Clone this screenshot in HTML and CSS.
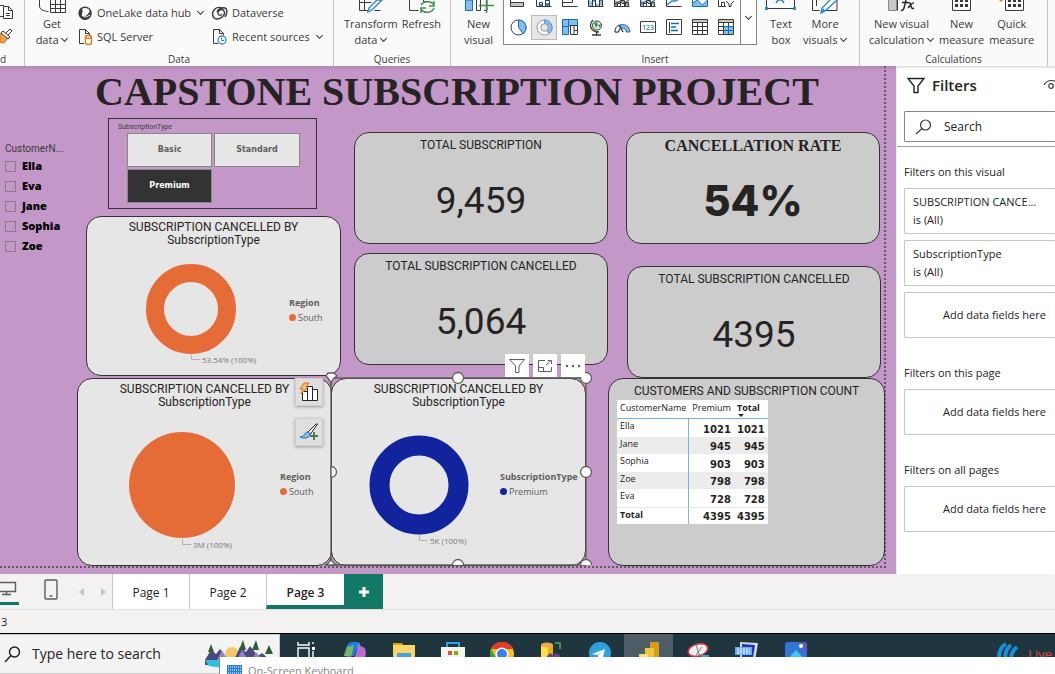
FILE: index.html
```html
<!DOCTYPE html>
<html lang="en">
<head>
<meta charset="utf-8">
<title>Capstone Subscription Project</title>
<link rel="stylesheet" href="styles.css">
</head>
<body>
<div class="app">
  <header class="ribbon">
    <section class="group clipboard">
      <div class="group-body stack-icons">
        <button class="icon-btn" aria-label="Copy"><svg width="14" height="16" viewBox="0 0 14 16" fill="none" stroke="#3b3a39"><path d="M0 1.500h4M0 12.500h3M3.500 2.500h5l4 4v8h-9zM8.500 2.500v4h4M6 9.500h4M6 11.500h4"/></svg></button>
        <button class="icon-btn" aria-label="Format painter"><svg width="14" height="16" viewBox="0 0 14 16"><path d="M0 6l3-1 5 5-4 5-4-1z" fill="#f5a04c" stroke="#d86a10"/><path d="M1 5l2-2 7 6-2 2zM6 5l4-4 2 2-4 4" fill="#fff" stroke="#3b3a39"/></svg></button>
      </div>
      <div class="group-label">d</div>
    </section>
    <section class="group">
      <div class="group-body data-body">
        <button class="big-btn get-data"><svg width="28" height="14" viewBox="0 0 28 14" fill="none" stroke="#3b3a39"><path d="M1.500 0v6c0 3 3 5 9 5.500M12.500 0v12.500h15V0M12.500 4.500h15M12.500 8.500h15M17.500 0v12.500M22.500 0v12.500"/></svg><span>Get<br>data <i class="chev"></i></span></button>
        <div class="pair first">
          <button class="small-btn"><svg width="15" height="15" viewBox="0 0 15 15"><circle cx="7" cy="7" r="5.800" fill="none" stroke="#3b3a39" stroke-width="1.600"/><path d="M2 3c3-1 3 2 2 5s3 3 5 1l4-5c2 6-2 10-6 10S0 9 2 3z" fill="#3b3a39"/><path d="M6 7l5-4M4 9c2 3 5 2 8 0" stroke="#fff" fill="none"/></svg><span>OneLake data hub</span><i class="chev"></i></button>
          <button class="small-btn"><svg width="15" height="16" viewBox="0 0 15 16"><path d="M6 14.500H1.500v-14h6l4 4V6M7.500.5v4h4" fill="none" stroke="#3b3a39"/><path d="M7.500 8v6c0 2 6 2 6 0V8c0-2-6-2-6 0c0 2 6 2 6 0" fill="#fff" stroke="#e07a1c" stroke-width="1.400"/></svg><span>SQL Server</span></button>
        </div>
        <div class="pair">
          <button class="small-btn"><svg width="16" height="14" viewBox="0 0 16 14" fill="none" stroke="#3b3a39" stroke-width="1.400"><path d="M10 8c-1 2-4 2-4-1s4-5 6-2c2 4-3 8-7 8S-1 8 2 4s8-3 9 0M5 6c1-3 5-5 8-4s2 6 0 9"/></svg><span>Dataverse</span></button>
          <button class="small-btn"><svg width="16" height="16" viewBox="0 0 16 16"><path d="M6 14.500H1.500v-14h6l4 4V6M7.500.5v4h4" fill="none" stroke="#3b3a39"/><circle cx="10" cy="11" r="4" fill="#fff" stroke="#2b88d8" stroke-width="1.300"/><path d="M9.500 8.500v3H12" fill="none" stroke="#2b88d8"/></svg><span>Recent sources</span><i class="chev"></i></button>
        </div>
      </div>
      <div class="group-label">Data</div>
    </section>
    <section class="group">
      <div class="group-body queries-body">
        <button class="big-btn"><svg width="28" height="14" viewBox="0 0 28 14"><path d="M2.500 0v10.500h10M2.500 2.500h12M7.500 0v10.500M23.500 10.500h-6" fill="none" stroke="#3b3a39"/><path d="M25 0L15 10l-4 2 1-4L20 0z" fill="#fff" stroke="#2b88d8" stroke-width="1.400"/><path d="M11 12l2-4 2 2z" fill="#83beec"/></svg><span>Transform<br>data <i class="chev"></i></span></button>
        <button class="big-btn"><svg width="28" height="14" viewBox="0 0 28 14" fill="none"><path d="M2.500 0v10.500h9M16.500 0v1.500h4" stroke="#3b3a39"/><path d="M14 5c3-5 12-4 13 1M27 1v5h-5M27 8c-2 5-10 6-13 1M14 13V8h5" stroke="#3f9150" stroke-width="1.500"/></svg><span>Refresh</span></button>
      </div>
      <div class="group-label">Queries</div>
    </section>
    <section class="group">
      <div class="group-body insert-body">
        <button class="big-btn new-visual"><svg width="30" height="14" viewBox="0 0 30 14"><path d="M1.500 0h7v10.500h-7z" fill="#83beec" stroke="#106ebe"/><path d="M12.500 0v10.500h4V0M20 10.500h3V0" fill="none" stroke="#3b3a39"/><path d="M22.500 0v13M15 5.500h15" stroke="#3f9150" stroke-width="1.500"/></svg><span>New<br>visual</span></button>
        <div class="gallery">
          <div class="gallery-grid">
            <button aria-label="Stacked bar"><svg width="16" height="7" viewBox="0 0 16 7"><path d="M.5 0v6.500h13v-4H.5" fill="#c8c6c4" stroke="#3b3a39"/></svg></button>
            <button aria-label="Stacked column"><svg width="16" height="7" viewBox="0 0 16 7"><path d="M.5 0v6.500h15M3.500 6V2.500h3V6M9.500 6V.5h4V6" fill="none" stroke="#3b3a39"/><path d="M4 4h2v2H4zM10 3h3v3h-3z" fill="#2b88d8"/></svg></button>
            <button aria-label="Clustered bar"><svg width="16" height="7" viewBox="0 0 16 7"><path d="M.5 0v6.500h15M.5 2.500h10V0" fill="none" stroke="#3b3a39"/></svg></button>
            <button aria-label="Clustered column"><svg width="16" height="7" viewBox="0 0 16 7"><path d="M.5 0v6.500h15M4.500 6V0h3v6M11.500 6V0h3v6" fill="#83beec" stroke="#3b3a39"/></svg></button>
            <button aria-label="Line and column"><svg width="16" height="7" viewBox="0 0 16 7"><path d="M.5 0v6.500h15M3.500 6V3.500h3V6M6.500 6V.5h4V6M11.500 6V2.500h3V6" fill="#a19f9d" stroke="#3b3a39"/><path d="M1 4l5-3 3 3 6-4" fill="none" stroke="#3b3a39"/></svg></button>
            <button aria-label="Line and stacked column"><svg width="16" height="7" viewBox="0 0 16 7"><path d="M.5 0v6.500h15M3.500 6V3.500h3V6M6.500 6V.5h4V6M11.500 6V2.500h3V6" fill="#83beec" stroke="#3b3a39"/><path d="M1 4l5-3 3 3 6-4" fill="none" stroke="#3b3a39"/></svg></button>
            <button aria-label="Line chart"><svg width="16" height="7" viewBox="0 0 16 7" fill="none"><path d="M.5 0v6.500h15" stroke="#3b3a39"/><path d="M1 5l5-4h3l3-1" stroke="#2b88d8" stroke-width="1.300"/></svg></button>
            <button aria-label="Area chart"><svg width="16" height="7" viewBox="0 0 16 7"><path d="M.5 0v3l5-3 5 5 5-5v6.500H.5z" fill="#83beec" stroke="#106ebe"/></svg></button>
            <button aria-label="Funnel"><svg width="16" height="7" viewBox="0 0 16 7" fill="none" stroke="#3b3a39"><path d="M.5 0v6.500H8M3.500 6V2.500h3V6M8 1l3 3v2.500h2V4l3-3"/></svg></button>
            <button aria-label="Pie chart"><svg width="17" height="17" viewBox="0 0 17 17"><circle cx="8.500" cy="8.500" r="7.500" fill="#fff" stroke="#3b3a39"/><path d="M8.500 8.500V1a7.500 7.500 0 0 1 4.500 13.500z" fill="#83beec" stroke="#106ebe"/></svg></button>
            <button class="selected" aria-label="Donut chart"><svg width="17" height="17" viewBox="0 0 17 17"><circle cx="8.500" cy="8.500" r="7.500" fill="#fff" stroke="#979593"/><path d="M8.500 1a7.500 7.500 0 0 1 4.500 13.500l-2-3a4 4 0 0 0-2.500-7z" fill="#83beec" stroke="#4a9bdc"/><circle cx="8.500" cy="8.500" r="3.800" fill="#e8e6e4" stroke="#979593"/></svg></button>
            <button aria-label="Treemap"><svg width="17" height="17" viewBox="0 0 17 17"><path d="M.5.5h6v15h-6z" fill="#83beec" stroke="#106ebe"/><path d="M.5 7.500h6M6.500 .5h9v6h-9z" fill="#83beec" stroke="#106ebe"/><path d="M8.500 6.500h7v9h-7zM12 6.500v9M12 11.500h4" fill="#fff" stroke="#3b3a39"/></svg></button>
            <button aria-label="Map"><svg width="15" height="17" viewBox="0 0 15 17"><circle cx="8" cy="6.500" r="4.500" fill="#e3f1e6" stroke="#3b3a39"/><path d="M5 4l3-1 1 3-2 3zM9 6l3-1-1 4z" fill="#3f9150"/><path d="M4 1C-1 6 2 13 10 13M7.500 13v3M3 16h9" fill="none" stroke="#3b3a39" stroke-width="1.300"/></svg></button>
            <button aria-label="Gauge"><svg width="17" height="10" viewBox="0 0 17 10"><path d="M1 9a7.500 7.500 0 0 1 15 0h-3.500a4 4 0 0 0-8 0z" fill="#83beec" stroke="#106ebe"/><path d="M1 9a7.500 7.500 0 0 1 4-7l2 3a4 4 0 0 0-2.500 4z" fill="#fff" stroke="#3b3a39"/><path d="M5 2l4 7" stroke="#3b3a39" stroke-width="1.500"/></svg></button>
            <button aria-label="Card"><svg width="17" height="13" viewBox="0 0 17 13"><path d="M.5.5h15v11H.5z" fill="#fff" stroke="#3b3a39"/><text x="2" y="9" class="card-digits">123</text></svg></button>
            <button aria-label="Multi-row card"><svg width="17" height="17" viewBox="0 0 17 17"><path d="M.5.500h15v15H.5zM3.500 3v11" fill="#fff" stroke="#3b3a39"/><path d="M5 4.500h8M5 8h5M5 11.500h7" stroke="#106ebe" stroke-width="1.600"/></svg></button>
            <button aria-label="Table"><svg width="17" height="17" viewBox="0 0 17 17"><path d="M.5.5h15v15H.5z" fill="#fff"/><path d="M.5.500h15v3H.5z" fill="#c8c6c4"/><path d="M.5.500h15v15H.5zM.5 3.500h15M.5 7.500h15M.5 11.500h15M5.500 3v12M10.500 3v12" fill="none" stroke="#3b3a39"/></svg></button>
            <button aria-label="Matrix"><svg width="17" height="17" viewBox="0 0 17 17"><path d="M.5.500h15v3H.5z" fill="#c8c6c4"/><path d="M6 7h9v8H6z" fill="#83beec"/><path d="M.5.500h15v15H.5zM.5 3.500h15M.5 7.500h5M.5 11.500h5M5.500 3v12M10.500 3v4" fill="none" stroke="#3b3a39"/><path d="M5.500 7.500h10M5.500 11.500h10M10.500 7v8" stroke="#106ebe"/></svg></button>
          </div>
          <button class="gallery-more" aria-label="More visuals"><i class="chev"></i></button>
        </div>
        <button class="big-btn text-box"><svg width="32" height="14" viewBox="0 0 32 14"><path d="M1.500 0v8.500h28V0" fill="none" stroke="#3b3a39"/><path d="M11 3l2-3M19 3l-2-3M12 0h6" fill="none" stroke="#2b88d8" stroke-width="1.500"/><path d="M0 7h3v3H0zM28 7h3v3h-3z" fill="#2b88d8"/></svg><span>Text<br>box</span></button>
        <button class="big-btn"><svg width="28" height="14" viewBox="0 0 28 14"><path d="M1.500 0v10.500h7M5.500 0v6M14 10.500h12V0" fill="none" stroke="#3b3a39"/><path d="M26 0L14 11l-4 2 1-5 8-8" fill="#fff" stroke="#2b88d8" stroke-width="1.400"/><path d="M10 13l2-5 2 3z" fill="#2b88d8"/></svg><span>More<br>visuals <i class="chev"></i></span></button>
      </div>
      <div class="group-label">Insert</div>
    </section>
    <section class="group">
      <div class="group-body calc-body">
        <button class="big-btn"><svg width="30" height="14" viewBox="0 0 30 14"><path d="M2.500 0v10.500h8V0" fill="#c8c6c4" stroke="#8a8886"/><path d="M11.500 0v10.500" stroke="#3b3a39"/><path d="M20 0l-2 8c-.5 2-2 3-3 2M16 2.500h6M22 3c2-1 2 0 3 3s1 3 3 2M28 3c-2-1-3 2-6 5" fill="none" stroke="#252423" stroke-width="1.400"/></svg><span>New visual<br>calculation <i class="chev"></i></span></button>
        <button class="big-btn"><svg width="20" height="14" viewBox="0 0 20 14"><path d="M.5 0v10.500h18V0" fill="none" stroke="#3b3a39"/><path d="M3 0h3v2H3zM8 0h3v2H8zM13 0h3v2h-3zM3 4h3v3H3zM8 4h3v3H8zM13 4h3v3h-3z" fill="#3b3a39"/></svg><span>New<br>measure</span></button>
        <button class="big-btn"><svg width="26" height="14" viewBox="0 0 26 14"><path d="M6.500 0v10.500h18V0" fill="none" stroke="#3b3a39"/><path d="M9 0h3v2H9zM14 0h3v2h-3zM19 0h3v2h-3zM9 4h3v3H9zM14 4h3v3h-3zM19 4h3v3h-3z" fill="#3b3a39"/><path d="M0 0h4L2 2z" fill="#e07a1c"/></svg><span>Quick<br>measure</span></button>
      </div>
      <div class="group-label">Calculations</div>
    </section>
  </header>

  <div class="workspace">
    <main class="canvas">
      <div class="page-edge"></div>
      <h1 class="title">CAPSTONE SUBSCRIPTION PROJECT</h1>

      <fieldset class="names">
        <legend>CustomerN...</legend>
        <label><input type="checkbox">Ella</label>
        <label><input type="checkbox">Eva</label>
        <label><input type="checkbox">Jane</label>
        <label><input type="checkbox">Sophia</label>
        <label><input type="checkbox">Zoe</label>
      </fieldset>

      <section class="slicer">
        <div class="slicer-title">SubscriptionType</div>
        <div class="tiles">
          <button>Basic</button><button>Standard</button><button class="on">Premium</button>
        </div>
      </section>

      <section class="card kpi v-total"><h2>TOTAL SUBSCRIPTION</h2><p>9,459</p></section>
      <section class="card kpi v-cancelled"><h2>TOTAL SUBSCRIPTION CANCELLED</h2><p>5,064</p></section>
      <section class="card kpi rate v-rate"><h2>CANCELLATION RATE</h2><p>54%</p></section>
      <section class="card kpi v-count"><h2>TOTAL SUBSCRIPTION CANCELLED</h2><p>4395</p></section>

      <section class="card chart v-donut">
        <h2>SUBSCRIPTION CANCELLED BY<br>SubscriptionType</h2>
        <div class="plot">
          <svg class="graph" width="180" height="120" viewBox="0 0 180 120"><circle cx="80" cy="56" r="36" fill="none" stroke="#e66c37" stroke-width="18"/><path d="M80.500 102v4.500h9" fill="none" stroke="#b3b0ad"/><text x="91" y="110">53.54% (100%)</text></svg>
          <div class="legend"><b>Region</b><span><i class="dot"></i>South</span></div>
        </div>
      </section>
      <section class="card chart v-pie">
        <h2>SUBSCRIPTION CANCELLED BY<br>SubscriptionType</h2>
        <div class="plot">
          <svg class="graph" width="180" height="140" viewBox="0 0 180 140"><circle cx="80" cy="66" r="53" fill="#e66c37"/><path d="M80.500 120v5.500h9" fill="none" stroke="#b3b0ad"/><text x="91" y="129">3M (100%)</text></svg>
          <div class="legend"><b>Region</b><span><i class="dot"></i>South</span></div>
        </div>
      </section>
      <section class="card chart v-premium">
        <h2>SUBSCRIPTION CANCELLED BY<br>SubscriptionType</h2>
        <div class="plot">
          <svg class="graph" width="160" height="140" viewBox="0 0 160 140"><circle cx="77" cy="66" r="39.500" fill="none" stroke="#12239e" stroke-width="20"/><path d="M77.500 116v5.500h8" fill="none" stroke="#b3b0ad"/><text x="88" y="125">5K (100%)</text></svg>
          <div class="legend"><b>SubscriptionType</b><span><i class="dot blue"></i>Premium</span></div>
        </div>
      </section>

      <section class="card v-matrix">
        <h2>CUSTOMERS AND SUBSCRIPTION COUNT</h2>
        <table>
          <thead><tr><th>CustomerName</th><th>Premium</th><th class="sorted">Total</th></tr></thead>
          <tbody>
            <tr><td>Ella</td><td>1021</td><td>1021</td></tr>
            <tr><td>Jane</td><td>945</td><td>945</td></tr>
            <tr><td>Sophia</td><td>903</td><td>903</td></tr>
            <tr><td>Zoe</td><td>798</td><td>798</td></tr>
            <tr><td>Eva</td><td>728</td><td>728</td></tr>
            <tr class="sum"><td>Total</td><td>4395</td><td>4395</td></tr>
          </tbody>
        </table>
      </section>

      <svg class="handles" width="270" height="195" viewBox="0 0 270 195" fill="#fff" stroke="#605e5c" stroke-width="1.300">
        <path d="M7 7h255v187H7z" fill="none"/>
        <path d="M2 5c2 2 5 4 5 10 0-6 4-9 6-10l-3-3H4zM1 194c3-1 6-3 6-8 0 5 3 7 6 8z"/>
        <circle cx="134" cy="7" r="5.500"/><circle cx="262" cy="7" r="5.500"/><circle cx="262" cy="101" r="5.500"/>
        <path d="M7 95.500a5.500 5.500 0 0 1 0 11zM128.500 194a5.500 5.500 0 0 1 11 0M256.500 194a5.500 5.500 0 0 1 11 0"/>
      </svg>

      <div class="visual-actions">
        <button aria-label="Filters"><svg width="18" height="16" viewBox="0 0 18 16" fill="none" stroke="#605e5c"><path d="M1.500 1.500h15L11 8v6.500H7.500V8z"/></svg></button>
        <button aria-label="Focus mode"><svg width="16" height="14" viewBox="0 0 16 14" fill="none" stroke="#605e5c"><path d="M8 1.500H1.500v11h13V8M1.500 8.500h5v4M9 6l5-4.500M10.500 1.500h4V5"/></svg></button>
        <button aria-label="More options"><svg width="16" height="4" viewBox="0 0 16 4" fill="#605e5c"><circle cx="2" cy="2" r="1.200"/><circle cx="8" cy="2" r="1.200"/><circle cx="14" cy="2" r="1.200"/></svg></button>
      </div>
      <div class="build-actions">
        <button aria-label="Suggest a visual"><svg width="20" height="20" viewBox="0 0 20 20"><path d="M3.500 9.500h5v9h-5zM8.500 4.500h5v14h-5zM13.500 7.500h5v11h-5z" fill="#fff" stroke="#252423"/><path d="M5 1h5L7 5h2l-7 7 2-5H1z" fill="#f8c27c" stroke="#d86a10"/></svg></button>
        <button aria-label="Format visual"><svg width="20" height="20" viewBox="0 0 20 20"><path d="M18.500 2l-7 10-2.500-2 8-8z" fill="#fff" stroke="#252423"/><path d="M9 10c-4 0-3 5-8 5 4 2 10 1 10-3z" fill="#83beec" stroke="#106ebe"/><path d="M15 10v8M11 14h8" stroke="#3f7d4e" stroke-width="1.800"/></svg></button>
      </div>
    </main>

    <aside class="filters">
      <div class="filters-head"><svg width="18" height="17" viewBox="0 0 18 17" fill="none" stroke="#252423" stroke-width="1.400"><path d="M1 1.500h16L11 9v6.500H7V9z"/></svg><h2>Filters</h2><svg class="eye" width="18" height="12" viewBox="0 0 18 12" fill="none" stroke="#3b3a39" stroke-width="1.200"><path d="M1 6c3-6 12-6 16 0"/><circle cx="8" cy="7" r="2.300"/></svg></div>
      <label class="search"><svg width="17" height="16" viewBox="0 0 17 16" fill="none" stroke="#3b3a39" stroke-width="1.200"><circle cx="10.500" cy="6" r="5"/><path d="M7 9.500L1 15"/></svg><input type="text" placeholder="Search" aria-label="Search"></label>
      <div class="filter-list">
        <h3>Filters on this visual</h3>
        <button class="fcard"><span>SUBSCRIPTION CANCE...</span><span>is (All)</span></button>
        <button class="fcard"><span>SubscriptionType</span><span>is (All)</span></button>
        <div class="fdrop">Add data fields here</div>
        <h3>Filters on this page</h3>
        <div class="fdrop">Add data fields here</div>
        <h3>Filters on all pages</h3>
        <div class="fdrop">Add data fields here</div>
      </div>
    </aside>
  </div>

  <nav class="tabs">
    <button class="view desktop" aria-label="Desktop layout"><svg width="17" height="15" viewBox="0 0 17 15" fill="none" stroke="#605e5c" stroke-width="1.400"><path d="M0 1.500h15.500v9H0M6.500 11v2.500M2 13.500h9"/></svg></button>
    <button class="view phone" aria-label="Phone layout"><svg width="14" height="21" viewBox="0 0 14 21" fill="none" stroke="#605e5c" stroke-width="1.400"><rect x="1" y="1" width="12" height="19" rx="1"/><path d="M5.500 17h3"/></svg></button>
    <button class="arrow" aria-label="Previous page"><svg width="5" height="8" viewBox="0 0 5 8" fill="#c8c6c4"><path d="M5 0v8L0 4z"/></svg></button>
    <button class="arrow" aria-label="Next page"><svg width="5" height="8" viewBox="0 0 5 8" fill="#c8c6c4"><path d="M0 0v8l5-4z"/></svg></button>
    <a class="tab" href="#p1">Page 1</a>
    <a class="tab" href="#p2">Page 2</a>
    <a class="tab current" href="#p3">Page 3</a>
    <button class="add" aria-label="New page"><svg width="12" height="12" viewBox="0 0 12 12"><path d="M6 1v10M1 6h10" stroke="#fff" stroke-width="3"/></svg></button>
  </nav>
  <div class="status">3</div>

  <footer class="taskbar">
    <label class="os-search"><svg width="17" height="17" viewBox="0 0 17 17" fill="none" stroke="#1b1b1b" stroke-width="1.400"><circle cx="10.500" cy="6" r="5"/><path d="M7 9.500L1 16"/></svg><input type="text" placeholder="Type here to search" aria-label="Type here to search">
      <svg class="scene" width="72" height="36" viewBox="0 0 72 36"><circle cx="29" cy="14" r="7" fill="#f8c66a"/><path d="M2 20l6-10 5 4 4-5 8 11h6l6-13 6 5 4-6 8 10 4-3 10 9v3H2z" fill="#4c4884"/><path d="M14 20l5-10 5 10zM34 20l5-10 6 10zM48 21l5-9 8 9z" fill="#8c86c8"/><path d="M8 4l-3 8h6zM40 0l-4 10h7zM53 0l-4 10h7zM66 5l-4 9h8z" fill="#2f5d34"/><path d="M2 20h18l20 2-10 12H16l4-6-14-2z" fill="#2fc0de"/></svg></label>
    <div class="apps">
      <button aria-label="Task view"><svg width="18" height="20" viewBox="0 0 18 20" fill="none" stroke="#fff" stroke-width="1.400"><path d="M1 0v3h11V0M1 16V6h11v10M16 0v2M16 9v10"/><path d="M15 5h3v3h-3z" fill="#fff" stroke="none"/></svg></button>
      <button aria-label="Copilot"><svg width="22" height="22" viewBox="0 0 22 22"><path d="M0 14C2 4 4 0 8 0h6c2 0 2 3 0 5L10 14z" fill="#1b7de2"/><path d="M0 14l3-9 7-2-3 12z" fill="#7bb661"/><path d="M14 1c2 0 2 4 5 4 5 1 3 15-3 15H9l4-12z" fill="#b86bd0"/></svg></button>
      <button aria-label="File Explorer"><svg width="22" height="20" viewBox="0 0 22 20"><path d="M0 1h9l2 3H0z" fill="#e0a30c"/><path d="M0 3h22v15H0z" fill="#fbd667"/><path d="M4 11h14v8H4z" fill="#4aa0df"/></svg></button>
      <button aria-label="Store"><svg width="24" height="22" viewBox="0 0 24 22"><path d="M6 5V1h12v4" fill="none" stroke="#22a8ea" stroke-width="2"/><path d="M0 5h24v16H0z" fill="#f5f5f5"/><path d="M7 9h4v4H7z" fill="#e8502d"/><path d="M13 9h4v4h-4z" fill="#7db700"/></svg></button>
      <button aria-label="Chrome"><svg width="24" height="24" viewBox="0 0 24 24"><circle cx="12" cy="12" r="12" fill="#fbc116"/><path d="M1 7a12 12 0 0 1 22 0H12z" fill="#e33b2e"/><path d="M1 7l7 12 3 5A12 12 0 0 1 1 7z" fill="#31a350"/><circle cx="12" cy="12" r="6.500" fill="#fff"/><circle cx="12" cy="12" r="5" fill="#3b82f0"/></svg></button>
      <button aria-label="Database tool"><svg width="22" height="22" viewBox="0 0 22 22"><path d="M1 3h12v17H1z" fill="#fbe04a"/><path d="M8 3h5v17H8z" fill="#e7b60a"/><ellipse cx="7" cy="3" rx="6" ry="2.500" fill="#f2a65a"/><path d="M15 1h5v6" fill="none" stroke="#3f9150" stroke-width="2"/><path d="M7 14l3-3 3 2 3-2 4 2v6H7z" fill="#6b3f8f"/></svg></button>
      <button aria-label="Telegram"><svg width="22" height="22" viewBox="0 0 22 22"><circle cx="11" cy="11" r="11" fill="#2da2db"/><path d="M3 12l13-5-3 12-4-3v-3l5-4-6 4z" fill="#fff"/></svg></button>
      <button class="active" aria-label="Power BI"><svg width="20" height="22" viewBox="0 0 20 22"><path d="M11 0h9v22h-9z" fill="#d99c13"/><path d="M6 6h9v16H6z" fill="#efc33c"/><path d="M0 12h9v10H0z" fill="#f8df7c"/></svg></button>
      <button aria-label="Snipping tool"><svg width="22" height="22" viewBox="0 0 22 22"><ellipse cx="11" cy="8" rx="10" ry="6" fill="#eee" stroke="#d13438" stroke-width="1.600" transform="rotate(-15 11 8)"/><path d="M9 3l4 12M15 5l-6 8" stroke="#777"/><path d="M14 13h8v5h-8z" fill="#4a9bdc"/></svg></button>
      <button aria-label="On-screen keyboard"><svg width="24" height="22" viewBox="0 0 24 22"><path d="M5 0l18 1-3 18H5z" fill="#d5d9e4"/><path d="M7 2l13 1-2 13H7z" fill="#1f35b5"/><path d="M0 5h17v8H0z" fill="#66aee8"/><path d="M2 7h13M2 9h13M2 11h13" stroke="#fff" stroke-dasharray="2 1"/></svg></button>
      <button aria-label="Photos"><svg width="22" height="22" viewBox="0 0 22 22"><rect width="22" height="22" rx="3" fill="#3474d4"/><path d="M14 0h5a3 3 0 0 1 3 3v12z" fill="#6457bd"/><path d="M1 19l10-11 10 11z" fill="#3cc8f0"/><circle cx="16" cy="4" r="2" fill="#fff"/></svg></button>
    </div>
    <div class="tray"><svg width="22" height="18" viewBox="0 0 22 18" fill="none" stroke="#1690d6" stroke-width="4"><path d="M2 16C2 8 5 4 9 2M8 17c0-7 2-11 6-14M14 17c0-6 2-9 6-12"/></svg><span>Live</span></div>
    <div class="preview"><svg width="15" height="12" viewBox="0 0 15 12"><path d="M0 0h15v12H0z" fill="#2b7cd3"/><path d="M1 2h13M1 5h13M1 8h13" stroke="#fff" stroke-dasharray="1 1"/></svg><span>On-Screen Keyboard</span></div>
  </footer>
</div>
</body>
</html>
```
FILE: styles.css
```css
* { box-sizing: border-box; }
body { margin: 0; font: 12px/16px "Open Sans", "Noto Sans", sans-serif; color: #252423; }
button { font: inherit; color: inherit; background: none; border: 0; padding: 0; cursor: pointer; }
h1, h2, h3, p { margin: 0; font-weight: 400; }
svg { display: block; flex: none; }
.app { height: 100vh; display: grid; grid-template-rows: auto minmax(0, 1fr) auto auto auto; overflow: hidden; }

/* Ribbon */
.ribbon { display: grid; grid-template-columns: 25px 309px 117px 409px 188px 1fr; height: 66px; background: #fafafa; overflow: hidden; color: #3b3a39; font-size: 11px; }
.group { display: flex; flex-direction: column; border-right: 1px solid #c8c6c4; margin-bottom: 2px; min-width: 0; }
.group-body { display: flex; height: 52px; white-space: nowrap; }
.group-label { text-align: center; font-size: 10px; line-height: 15px; }
.clipboard .group-label { text-align: left; }
.stack-icons { flex-direction: column; gap: 8px; padding-top: 4px; }
.icon-btn { width: 14px; }
.big-btn { display: flex; flex-direction: column; align-items: center; gap: 2px; }
.chev { display: inline-block; width: 5px; height: 5px; border: solid #3b3a39; border-width: 0 1px 1px 0; transform: rotate(45deg); margin: 0 1px 3px 1px; }
.small-btn { display: flex; align-items: center; gap: 4px; height: 24px; }
.small-btn .chev { margin-left: 3px; }
.data-body { padding-left: 10px; }
.get-data { width: 34px; margin-right: 9px; }
.pair { padding-top: 1px; }
.pair.first { width: 134px; }
.queries-body { padding-left: 10px; gap: 4px; }
.insert-body { padding-left: 12px; }
.new-visual { width: 31px; margin-right: 9px; }
.text-box { width: 32px; margin: 0 6px 0 8px; }
.gallery { display: flex; height: 45px; border: 1px solid #8a8886; border-top: 0; background: #fff; }
.gallery-grid { display: grid; grid-template-columns: repeat(9, 26px); grid-template-rows: 7px 25px; row-gap: 8px; padding: 0 1px; }
.gallery-grid button { display: grid; place-items: center; }
.gallery-grid .selected { background: #e8e6e4; border: 1px solid #bebbb8; }
.gallery-more { width: 16px; border-left: 1px solid #8a8886; display: grid; place-items: center; padding-bottom: 8px; }
.card-digits { font: 600 7px "Open Sans", sans-serif; fill: #2b88d8; }
.calc-body { padding-left: 9px; gap: 5px; }

/* Report canvas */
.workspace { display: grid; grid-template-columns: minmax(0, 1fr) 159px; min-height: 0; }
.canvas { position: relative; overflow: hidden; background: linear-gradient(#b086b4, #c497c9 5px); }
.page-edge { position: absolute; left: 0; top: 0; width: 886px; height: 502px; border: dotted #605e5c; border-width: 0 2px 2px 0; }
.title { position: absolute; left: 95px; top: 3px; white-space: nowrap; font: 700 40px/46px "Liberation Serif", serif; }
.names { position: absolute; left: 5px; top: 76px; margin: 0; padding: 0; border: 0; display: grid; font: 800 11px/20px "Open Sans", sans-serif; color: #000; }
.names legend { padding: 0; font: 10px/14px Roboto, sans-serif; color: #3b3a39; }
.names label { display: flex; align-items: center; gap: 6px; }
.names input { appearance: none; width: 11px; height: 11px; margin: 0; border: 1px solid #8a7a8c; }
.slicer { position: absolute; left: 108px; top: 52px; width: 209px; height: 91px; border: 1px solid #333; padding: 4px 16px 4px 9px; }
.slicer-title { font: 7px/9px Roboto, sans-serif; color: #3b3a39; }
.tiles { display: grid; grid-template-columns: 85px 86px; grid-auto-rows: 34px; gap: 2px; padding: 1px 0 0 9px; }
.tiles button { background: #e6e6e6; border: 1px solid #8a8886; font: 700 8px/12px "DejaVu Sans", sans-serif; color: #605e5c; }
.tiles .on { background: #333; color: #fff; }

.card { position: absolute; border: 1px solid #333; border-radius: 15px; background: #ccc; text-align: center; padding-top: 4px; }
.card h2 { font: 12px/16px Roboto, sans-serif; }
.kpi { width: 254px; height: 112px; }
.kpi p { font: 37px/46px Roboto, sans-serif; padding-top: 25px; }
.rate h2 { font: 700 16px/18px "Liberation Serif", serif; }
.rate p { font: 800 42px/50px Inter, sans-serif; padding-top: 21px; }
.v-total { left: 354px; top: 66px; }
.v-cancelled { left: 354px; top: 187px; }
.v-rate { left: 626px; top: 66px; }
.v-count { left: 627px; top: 200px; }
.chart { background: #e6e6e6; width: 255px; }
.chart h2 { line-height: 13px; }
.v-donut { left: 86px; top: 150px; height: 160px; }
.v-pie { left: 77px; top: 312px; height: 188px; }
.v-premium { left: 331px; top: 312px; height: 188px; }
.plot { display: flex; align-items: center; }
.graph { margin-left: 24px; overflow: visible; }
.v-donut .graph { margin-top: 6px; }
.v-pie .graph, .v-premium .graph { margin-top: 10px; }
.v-premium .graph { margin-left: 10px; }
.graph text { font: 8px "Open Sans", sans-serif; fill: #7a7876; }
.legend { display: grid; gap: 1px; text-align: left; font: 9px/14px "Open Sans", sans-serif; color: #605e5c; margin-left: -2px; }
.legend span { display: flex; align-items: center; gap: 2px; }
.dot { width: 7px; height: 7px; border-radius: 50%; background: #e66c37; }
.dot.blue { background: #12239e; }
.v-matrix { left: 608px; top: 312px; width: 277px; height: 188px; }
.v-matrix table { margin: 1px 0 0 8px; border-collapse: separate; border-spacing: 0; background: #fff; font: 9px/12px "Open Sans", sans-serif; }
.v-matrix th { height: 19px; font-weight: 400; padding: 0 3px 3px 3px; text-align: left; border-bottom: 1px solid #71b5f5; position: relative; }
.v-matrix th.sorted { font-weight: 700; }
.sorted::after { content: ""; position: absolute; left: 4px; bottom: 1px; border: 3px solid transparent; border-top-color: #252423; border-bottom: 0; }
.v-matrix td { height: 17px; padding: 0 3px; text-align: right; font: 700 10px/14px "DejaVu Sans", sans-serif; vertical-align: bottom; }
.v-matrix tr:nth-child(odd) td { height: 18px; }
.v-matrix td:first-child { text-align: left; vertical-align: top; font: 9px/14px "Open Sans", sans-serif; border-right: 1px solid #71b5f5; }
.v-matrix tbody tr:nth-child(even):not(.sum) { background: #ececec; }
.v-matrix .sum td { border-top: 1px solid #ececec; }
.v-matrix .sum td:first-child { font-weight: 700; }
.handles { position: absolute; left: 324px; top: 305px; }
.visual-actions { position: absolute; left: 505px; top: 288px; display: flex; gap: 4px; }
.visual-actions button { width: 24px; height: 23px; background: #fff; display: grid; place-items: center; }
.build-actions { position: absolute; left: 295px; top: 312px; display: grid; gap: 12px; }
.build-actions button { width: 28px; height: 28px; background: #e1dfdd; border: 1px solid #d2d0ce; box-shadow: 0 1px 3px #999; display: grid; place-items: center; }

/* Filter pane */
.filters { background: #fff; border-left: 1px solid #edebe9; overflow: hidden; white-space: nowrap; box-shadow: inset 0 3px 3px -2px #ccc; }
.filters-head { display: flex; align-items: center; gap: 7px; padding: 8px 0 0 10px; }
.filters-head h2 { font-size: 15px; line-height: 22px; font-weight: 600; }
.eye { margin-left: 59px; }
.search { display: flex; align-items: center; gap: 12px; height: 31px; margin: 15px 0 4px 7px; padding-left: 10px; border: 1px solid #8a8886; border-right: 0; border-radius: 2px 0 0 2px; }
.search input { border: 0; padding: 0; width: 100px; background: none; font: inherit; }
input::placeholder { color: #252423; opacity: 1; }
.filter-list { border-top: 1px solid #a19f9d; padding: 17px 0 0 7px; font-size: 11px; }
.filter-list h3 { font-size: 11px; line-height: 16px; margin-bottom: 8px; }
.fcard, .fdrop { display: flex; width: 100%; height: 46px; border: 1px solid #c8c6c4; border-right: 0; border-radius: 2px 0 0 2px; margin-bottom: 6px; }
.fcard { flex-direction: column; padding: 4px 8px; line-height: 18px; text-align: left; align-items: flex-start; justify-content: center; }
.fdrop { align-items: center; padding-left: 38px; margin-bottom: 27px; }

/* Page tabs and status */
.tabs { display: flex; align-items: stretch; height: 36px; background: #f3f2f1; border-bottom: 1px solid #e1dfdd; }
.view { display: grid; place-items: center; }
.desktop { width: 19px; justify-items: start; border-bottom: 3px solid #117865; margin-bottom: 4px; }
.phone { width: 14px; margin: 0 17px 4px 25px; }
.arrow { width: 12px; margin-right: 10px; display: grid; place-items: center; }
.arrow + .arrow { margin-right: 3px; }
.tab { width: 77px; display: grid; place-items: center; background: #fff; border-left: 1px solid #c8c6c4; color: inherit; text-decoration: none; padding-top: 2px; border-bottom: 0; }
.tab.current { width: 78px; font-weight: 600; border-bottom: 4px solid #117865; padding-top: 6px; }
.add { width: 39px; background: #117865; display: grid; place-items: center; }
.status { height: 24px; background: #f3f2f1; border-bottom: 1px solid #000; padding: 4px 0 0 1px; font-size: 11px; }

/* System taskbar */
.taskbar { position: relative; display: flex; height: 40px; background: #20363f; overflow: hidden; }
.os-search { width: 280px; display: flex; align-items: center; gap: 11px; padding-left: 4px; background: #f3f3f3; border: solid #c8c8c8; border-width: 1px 1px 1px 0; }
.os-search input { border: 0; padding: 0; width: 150px; background: none; font: 14px/20px "Open Sans", sans-serif; }
.scene { margin-left: 10px; align-self: flex-start; margin-top: 5px; }
.apps { display: flex; padding-left: 1px; }
.apps button { width: 49px; display: grid; justify-items: center; align-content: start; padding-top: 8px; }
.apps .active { background: #4d5d66; }
.tray { margin-left: auto; display: flex; gap: 9px; padding: 8px 3px 0 0; color: #e04848; font-size: 13px; line-height: 24px; }
.preview { position: absolute; left: 219px; right: 0; bottom: 0; height: 17px; background: #fff; border-left: 1px solid #8a8886; display: flex; gap: 6px; padding: 8px 0 0 7px; color: #8a8886; overflow: hidden; font-size: 11px; line-height: 12px; }
```
